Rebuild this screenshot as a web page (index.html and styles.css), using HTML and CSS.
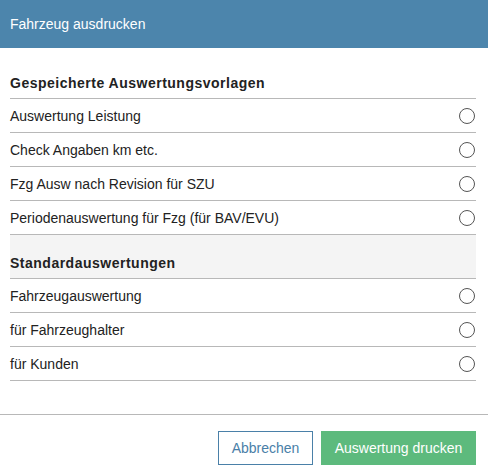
FILE: index.html
```html
<!DOCTYPE html>
<html lang="de">
<head>
    <meta charset="UTF-8">
    <title>Fahrzeug ausdrucken</title>
    <link rel="stylesheet" href="styles.css">
</head>
<body>
    <div class="dialog">
        <div class="dialog-header">Fahrzeug ausdrucken</div>

        <div class="dialog-body">
            <div class="group-title">Gespeicherte Auswertungsvorlagen</div>
            <label class="option-row"><span>Auswertung Leistung</span><input type="radio" name="report"><span class="radio"></span></label>
            <label class="option-row"><span>Check Angaben km etc.</span><input type="radio" name="report"><span class="radio"></span></label>
            <label class="option-row"><span>Fzg Ausw nach Revision für SZU</span><input type="radio" name="report"><span class="radio"></span></label>
            <label class="option-row"><span>Periodenauswertung für Fzg (für BAV/EVU)</span><input type="radio" name="report"><span class="radio"></span></label>

            <div class="group-title shaded">Standardauswertungen</div>
            <label class="option-row"><span>Fahrzeugauswertung</span><input type="radio" name="report"><span class="radio"></span></label>
            <label class="option-row"><span>für Fahrzeughalter</span><input type="radio" name="report"><span class="radio"></span></label>
            <label class="option-row"><span>für Kunden</span><input type="radio" name="report"><span class="radio"></span></label>
        </div>

        <div class="dialog-footer">
            <button class="btn btn-outline">Abbrechen</button>
            <button class="btn btn-success">Auswertung drucken</button>
        </div>
    </div>
</body>
</html>
```

FILE: styles.css
```css
* {
    box-sizing: border-box;
}
body {
    margin: 0;
    font-family: 'Liberation Sans', Arial, sans-serif;
    font-size: 14px;
    color: #222;
    background: #fff;
}
.dialog {
    width: 488px;
}
.dialog-header {
    height: 48px;
    padding: 0 10px;
    display: flex;
    align-items: center;
    background: #4c85ac;
    color: #fff;
    font-size: 14px;
}
.dialog-body {
    padding: 7px 12px 33px 10px;
}
.group-title {
    height: 44px;
    padding: 20px 0 0 0;
    line-height: 16px;
    font-weight: bold;
    letter-spacing: 0.5px;
    border-bottom: 1px solid #b8b8b8;
}
.group-title.shaded {
    background: #f4f4f4;
}
.option-row {
    height: 34px;
    display: flex;
    align-items: center;
    justify-content: space-between;
    border-bottom: 1px solid #b8b8b8;
    cursor: pointer;
}
.option-row input {
    display: none;
}
.radio {
    width: 16px;
    height: 16px;
    margin-right: 1px;
    border: 1px solid #555;
    border-radius: 50%;
    background: #fff;
}
.option-row input:checked + .radio {
    box-shadow: inset 0 0 0 4px #fff;
    background: #4c85ac;
}
.dialog-footer {
    border-top: 1px solid #b8b8b8;
    padding: 16px 12px 6px;
    display: flex;
    justify-content: flex-end;
    gap: 8px;
}
.btn {
    height: 34px;
    padding: 0 12px;
    font-family: 'Liberation Sans', Arial, sans-serif;
    font-size: 14px;
    border: 1px solid transparent;
    cursor: pointer;
}
.btn-outline {
    width: 95px;
    background: #fff;
    border-color: #4a80a8;
    color: #4a80a8;
}
.btn-success {
    width: 155px;
    background: #5dba7d;
    color: #fff;
}
```
